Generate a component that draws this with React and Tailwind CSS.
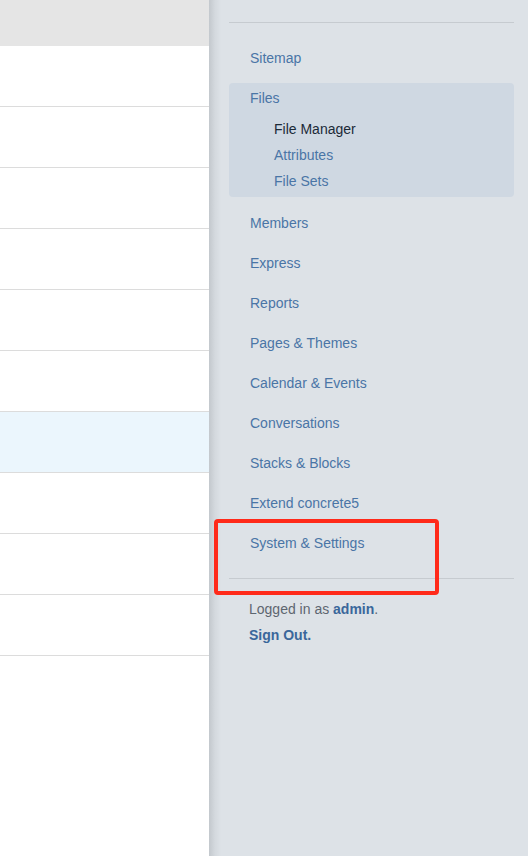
const rows = Array.from({ length: 10 });

const menu = [
  'Members',
  'Express',
  'Reports',
  'Pages & Themes',
  'Calendar & Events',
  'Conversations',
  'Stacks & Blocks',
  'Extend concrete5',
  'System & Settings',
];

export default function App() {
  return (
    <div className="relative flex w-[528px] h-[856px] overflow-hidden font-['Liberation_Sans',Arial,sans-serif] text-[14px]">
      {/* left list */}
      <div className="w-[209px] shrink-0 bg-white flex flex-col">
        <div className="h-[46px] bg-[#e5e5e5]"></div>
        {rows.map((_, i) => (
          <div
            key={i}
            className={`h-[61px] border-b border-[#dcdcdc] ${i === 6 ? 'bg-[#ebf6fd]' : 'bg-white'}`}
          ></div>
        ))}
      </div>

      {/* right panel */}
      <div className="flex-1 flex bg-[#dde2e7]">
        <div className="w-[12px] shrink-0 bg-gradient-to-r from-[#c3c8cd] via-[#d4d9de] to-[#dde2e7]"></div>
        <div className="flex-1 pl-[8px] pr-[14px] pt-[22px]">
          <div className="border-t border-[#c6cbd0]"></div>
          <div className="mt-[15px] h-[40px] flex items-center pl-[21px] text-[#4a75a6]">Sitemap</div>

          <div className="mt-[5px] rounded bg-[#cfd8e2] pb-[3px]">
            <div className="h-[30px] flex items-center pl-[21px] text-[#4a75a6]">Files</div>
            <div className="mt-[3px] pl-[45px]">
              <div className="h-[26px] flex items-center text-[#1b2a38]">File Manager</div>
              <div className="h-[26px] flex items-center text-[#4a75a6]">Attributes</div>
              <div className="h-[26px] flex items-center text-[#4a75a6]">File Sets</div>
            </div>
          </div>

          <div className="mt-[6px]">
            {menu.map((m) => (
              <div key={m} className="h-[40px] flex items-center pl-[21px] text-[#4a75a6]">
                {m}
              </div>
            ))}
          </div>

          <div className="mt-[15px] border-t border-[#c6cbd0]"></div>
          <div className="pl-[20px] pt-[20px] text-[#5d6670] leading-[20px]">
            Logged in as <span className="font-bold text-[#3a679b]">admin</span>.
          </div>
          <div className="pl-[20px] mt-[6px] font-bold text-[#3a679b] leading-[20px]">Sign Out.</div>
        </div>
      </div>

      {/* annotation box */}
      <div className="absolute left-[214px] top-[519px] w-[225px] h-[76px] border-4 border-[#ff2a1a] rounded-[4px]"></div>
    </div>
  );
}
